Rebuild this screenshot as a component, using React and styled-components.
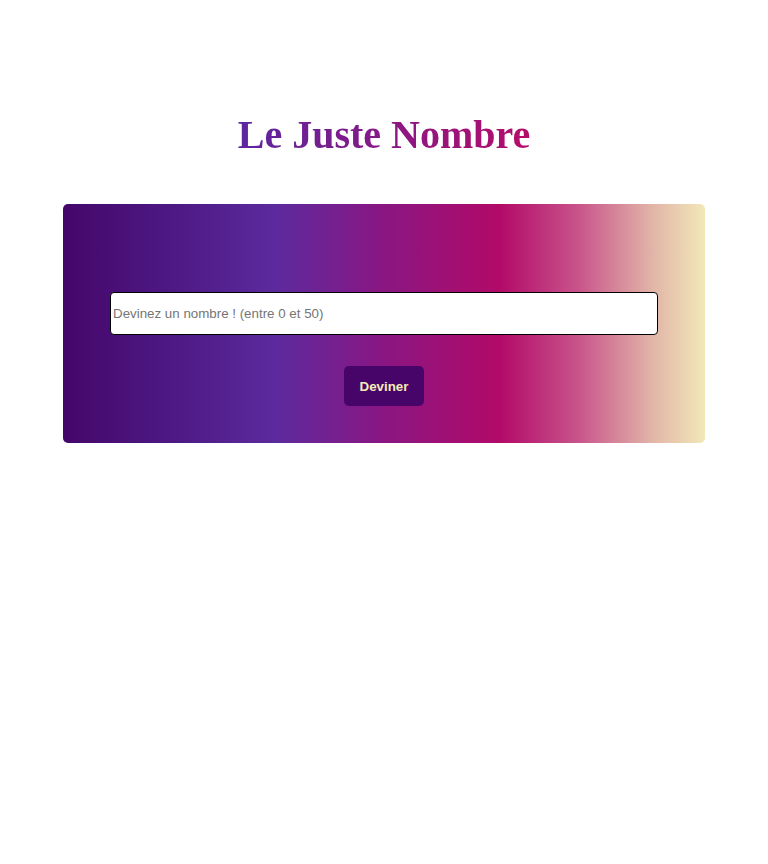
import React from 'react';
import styled, { createGlobalStyle } from 'styled-components';

const GlobalStyle = createGlobalStyle`
  body {
    margin: 0;
    background: #ffffff;
    font-family: "Liberation Sans", Arial, sans-serif;
  }
`;

const Page = styled.div`
  display: flex;
  flex-direction: column;
  align-items: center;
  padding-top: 107px;
`;

const Title = styled.h1`
  margin: 0 0 41px 0;
  font-family: "Liberation Serif", "Times New Roman", serif;
  font-size: 40px;
  font-weight: bold;
  line-height: 56px;
  background: linear-gradient(to right, #5b26a0, #b40c6a);
  -webkit-background-clip: text;
  background-clip: text;
  color: transparent;
`;

const Card = styled.div`
  box-sizing: border-box;
  width: 642px;
  height: 239px;
  border-radius: 5px;
  padding: 88px 47px 0 47px;
  display: flex;
  flex-direction: column;
  align-items: center;
  background: linear-gradient(
    to right,
    #45066a 0%,
    #4f1c88 20%,
    #5c2a9e 33%,
    #8a1682 50%,
    #b20a68 68%,
    #c8528a 80%,
    #e2b6a8 92%,
    #f2e8b8 100%
  );
`;

const GuessInput = styled.input`
  box-sizing: border-box;
  width: 548px;
  height: 43px;
  padding: 0 2px;
  border: 1px solid #000000;
  border-radius: 4px;
  background: #ffffff;
  font-family: "Liberation Sans", Arial, sans-serif;
  font-size: 13.333px;
  outline: none;
  &::placeholder {
    color: #757575;
  }
`;

const GuessButton = styled.button`
  margin-top: 31px;
  width: 80px;
  height: 40px;
  border: none;
  border-radius: 5px;
  background: #47056a;
  color: #f4ecb4;
  font-family: "Liberation Sans", Arial, sans-serif;
  font-size: 13.333px;
  font-weight: bold;
  cursor: pointer;
`;

const App = () => {
  return (
    <>
      <GlobalStyle />
      <Page>
        <Title>Le Juste Nombre</Title>
        <Card>
          <GuessInput type="number" placeholder="Devinez un nombre ! (entre 0 et 50)" />
          <GuessButton>Deviner</GuessButton>
        </Card>
      </Page>
    </>
  );
};

export default App;
